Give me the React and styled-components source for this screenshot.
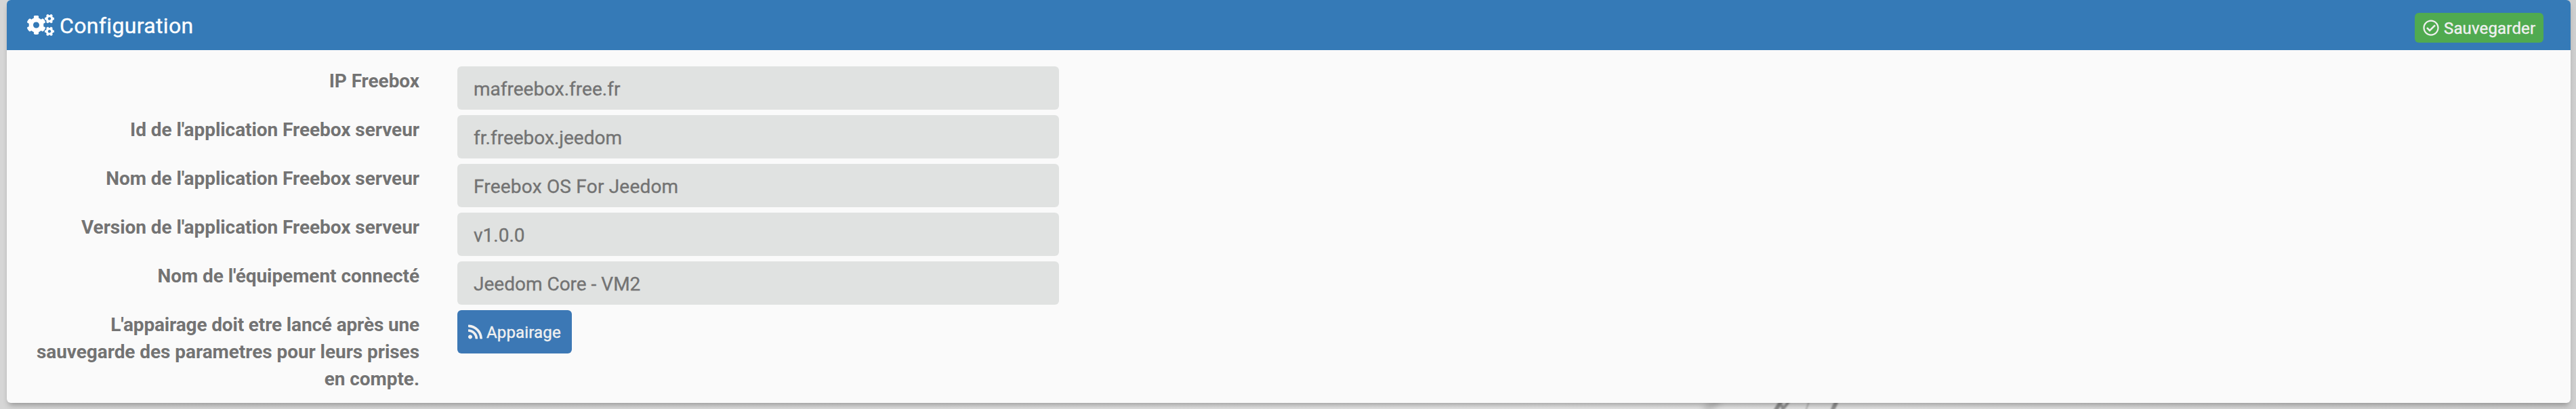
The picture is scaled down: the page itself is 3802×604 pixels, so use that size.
import React from "react";
import styled, { createGlobalStyle } from "styled-components";
import { FaCogs, FaRegCheckCircle, FaRss } from "react-icons/fa";

const GlobalStyle = createGlobalStyle`
  * { box-sizing: border-box; }
  body { margin: 0; background: #d7d7d7; overflow: hidden; }
`;

const Page = styled.div`
  height: 604px;
  padding: 0 8px 9px 10px;
  overflow: hidden;
  position: relative;
  font-family: Roboto, "Liberation Sans", sans-serif;
  font-size: 28px;
  line-height: 40px;
  color: #737373;
  background: linear-gradient(90deg, #d6d6d6 0, #dadada 900px, #e6e6e6 2300px, #e2e2e2 2800px, #cfcfcf 3802px);
`;

const Backdrop = styled.svg`
  position: absolute;
  left: 2380px;
  top: 590px;
`;

const Panel = styled.section`
  position: relative;
  height: 595px;
  border-radius: 6px;
  background: #fafafa;
  box-shadow: 0 6px 9px -3px rgba(0, 0, 0, 0.32);
`;

const PanelHeader = styled.header`
  display: flex;
  align-items: flex-start;
  justify-content: space-between;
  height: 74px;
  padding: 19px 40px 0 30px;
  border-radius: 6px 6px 0 0;
  background: #357ab7;
`;

const Title = styled.h3`
  display: flex;
  align-items: flex-start;
  gap: 8px;
  margin: 1px 0 0;
  font-size: 32px;
  font-weight: 400;
  line-height: 36px;
  letter-spacing: 0.35px;
  -webkit-text-stroke: 0.35px currentColor;
  color: #fff;
`;

const CogsIcon = styled(FaCogs)`
  width: 40px;
  height: 32px;
  margin-top: 1px;
`;

const CheckIcon = styled(FaRegCheckCircle)`
  width: 24px;
  height: 24px;
`;

const FeedIcon = styled(FaRss)`
  width: 21px;
  height: 24px;
`;

const Button = styled.button`
  display: flex;
  align-items: center;
  gap: ${(p) => p.$gap}px;
  width: ${(p) => p.$width}px;
  height: ${(p) => p.$height}px;
  padding: 0 0 0 ${(p) => p.$inset}px;
  border: 0;
  border-radius: 6px;
  background: ${(p) => p.$color};
  color: #f0f0f0;
  font: 400 24px/36px Roboto, "Liberation Sans", sans-serif;
  letter-spacing: 0.15px;
  white-space: nowrap;
`;

const Caption = styled.span`
  padding-top: 2px;
  -webkit-text-stroke: 0.4px currentColor;
`;

const Form = styled.form`
  display: flex;
  flex-direction: column;
  gap: 8px;
  padding-top: 24px;
`;

const Row = styled.div`
  display: flex;
  align-items: flex-start;
  gap: 56px;
`;

const Label = styled.label`
  width: 609px;
  padding: 2px 0 0 34px;
  text-align: right;
  font-weight: 700;
  letter-spacing: -0.06px;

  &::first-line {
    letter-spacing: ${(p) => (p.$tightStart ? -0.15 : -0.06)}px;
  }
`;

const Field = styled.input`
  width: 888px;
  height: 64px;
  padding: 2px 24px 0;
  border: 0;
  border-radius: 6px;
  background: #e0e2e1;
  color: #737373;
  font: 400 28px/40px Roboto, "Liberation Sans", sans-serif;
  letter-spacing: ${(p) => p.$tracking || 0}px;
  -webkit-text-stroke: 0.35px currentColor;
`;

const fields = [
  { label: "IP Freebox", value: "mafreebox.free.fr" },
  { label: "Id de l'application Freebox serveur", value: "fr.freebox.jeedom" },
  { label: "Nom de l'application Freebox serveur", value: "Freebox OS For Jeedom", tracking: 0.2 },
  { label: "Version de l'application Freebox serveur", value: "v1.0.0" },
  { label: "Nom de l'équipement connecté", value: "Jeedom Core - VM2" },
];

export default function App() {
  return (
    <Page>
      <GlobalStyle />
      <Backdrop width="500" height="14" viewBox="0 0 500 14" fill="none">
        <defs>
          <filter id="soft" x="-20%" y="-50%" width="140%" height="200%">
            <feGaussianBlur stdDeviation="1.2" />
          </filter>
          <filter id="softer" x="-200%" y="-50%" width="500%" height="200%">
            <feGaussianBlur stdDeviation="5" />
          </filter>
        </defs>
        <path d="M158 -2 L136 18" stroke="#777" strokeWidth="12" opacity="0.3" filter="url(#softer)" />
        <g stroke="#6f6f6f" filter="url(#soft)">
          <path d="M250 1 L240 17" strokeWidth="6" opacity="0.75" />
          <path d="M261 2 L251 15 L250 8" strokeWidth="4" opacity="0.7" />
          <path d="M290 3 L285 17" strokeWidth="2" opacity="0.45" />
          <path d="M331 2 L324 17" strokeWidth="6" opacity="0.7" />
        </g>
      </Backdrop>
      <Panel>
        <PanelHeader>
          <Title>
            <CogsIcon />
            Configuration
          </Title>
          <Button $color="#50aa50" $width={190} $height={44} $inset={12} $gap={7}>
            <CheckIcon />
            <Caption>Sauvegarder</Caption>
          </Button>
        </PanelHeader>
        <Form>
          {fields.map(({ label, value, tracking }) => (
            <Row key={label}>
              <Label>{label}</Label>
              <Field defaultValue={value} $tracking={tracking} />
            </Row>
          ))}
          <Row>
            <Label $tightStart>
              L'appairage doit etre lancé après une sauvegarde des parametres pour leurs prises en compte.
            </Label>
            <Button type="button" $color="#3c78b5" $width={169} $height={64} $inset={16} $gap={6}>
              <FeedIcon />
              <Caption>Appairage</Caption>
            </Button>
          </Row>
        </Form>
      </Panel>
    </Page>
  );
}
